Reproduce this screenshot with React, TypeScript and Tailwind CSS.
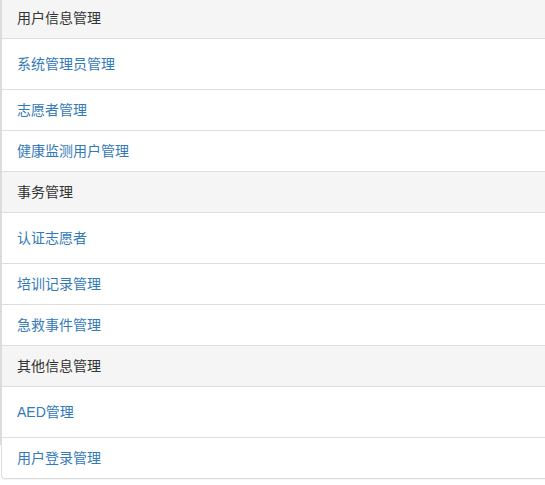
import React from "react";

type Group = { title: string; items: string[] };

const groups: Group[] = [
  { title: "用户信息管理", items: ["系统管理员管理", "志愿者管理", "健康监测用户管理"] },
  { title: "事务管理", items: ["认证志愿者", "培训记录管理", "急救事件管理"] },
  { title: "其他信息管理", items: ["AED管理", "用户登录管理"] },
];

export default function App() {
  return (
    <div
      className="w-[545px] h-[485px] overflow-hidden bg-white flex text-[14px]"
      style={{ fontFamily: '"Liberation Sans", "Noto Sans CJK SC", sans-serif' }}
    >
      <div className="w-[1px] h-[445px] bg-[#dcdcdc] shrink-0" />
      <div className="w-[560px] shrink-0 self-start mt-[-2px] border-l border-b border-[#ddd] rounded-bl-[4px] shadow-[0_1px_1px_rgba(0,0,0,0.05)] flex flex-col">
        {groups.map((g, gi) => (
          <div key={g.title} className={gi > 0 ? "border-t border-[#ddd]" : ""}>
            <div className="h-[41px] bg-[#f5f5f5] flex items-center pl-[15px] text-[#333] border-b border-[#ddd]">
              {g.title}
            </div>
            <div className="flex flex-col">
              {g.items.map((it, i) => {
                const last = i === g.items.length - 1;
                const h = i === 0 ? "h-[51px]" : last ? "h-[40px]" : "h-[41px]";
                return (
                  <a
                    key={it}
                    href="#"
                    className={`${h} ${last ? "" : "border-b border-[#ddd]"} flex items-center pl-[15px] pt-[1px] text-[#337ab7]`}
                  >
                    {it}
                  </a>
                );
              })}
            </div>
          </div>
        ))}
      </div>
    </div>
  );
}
